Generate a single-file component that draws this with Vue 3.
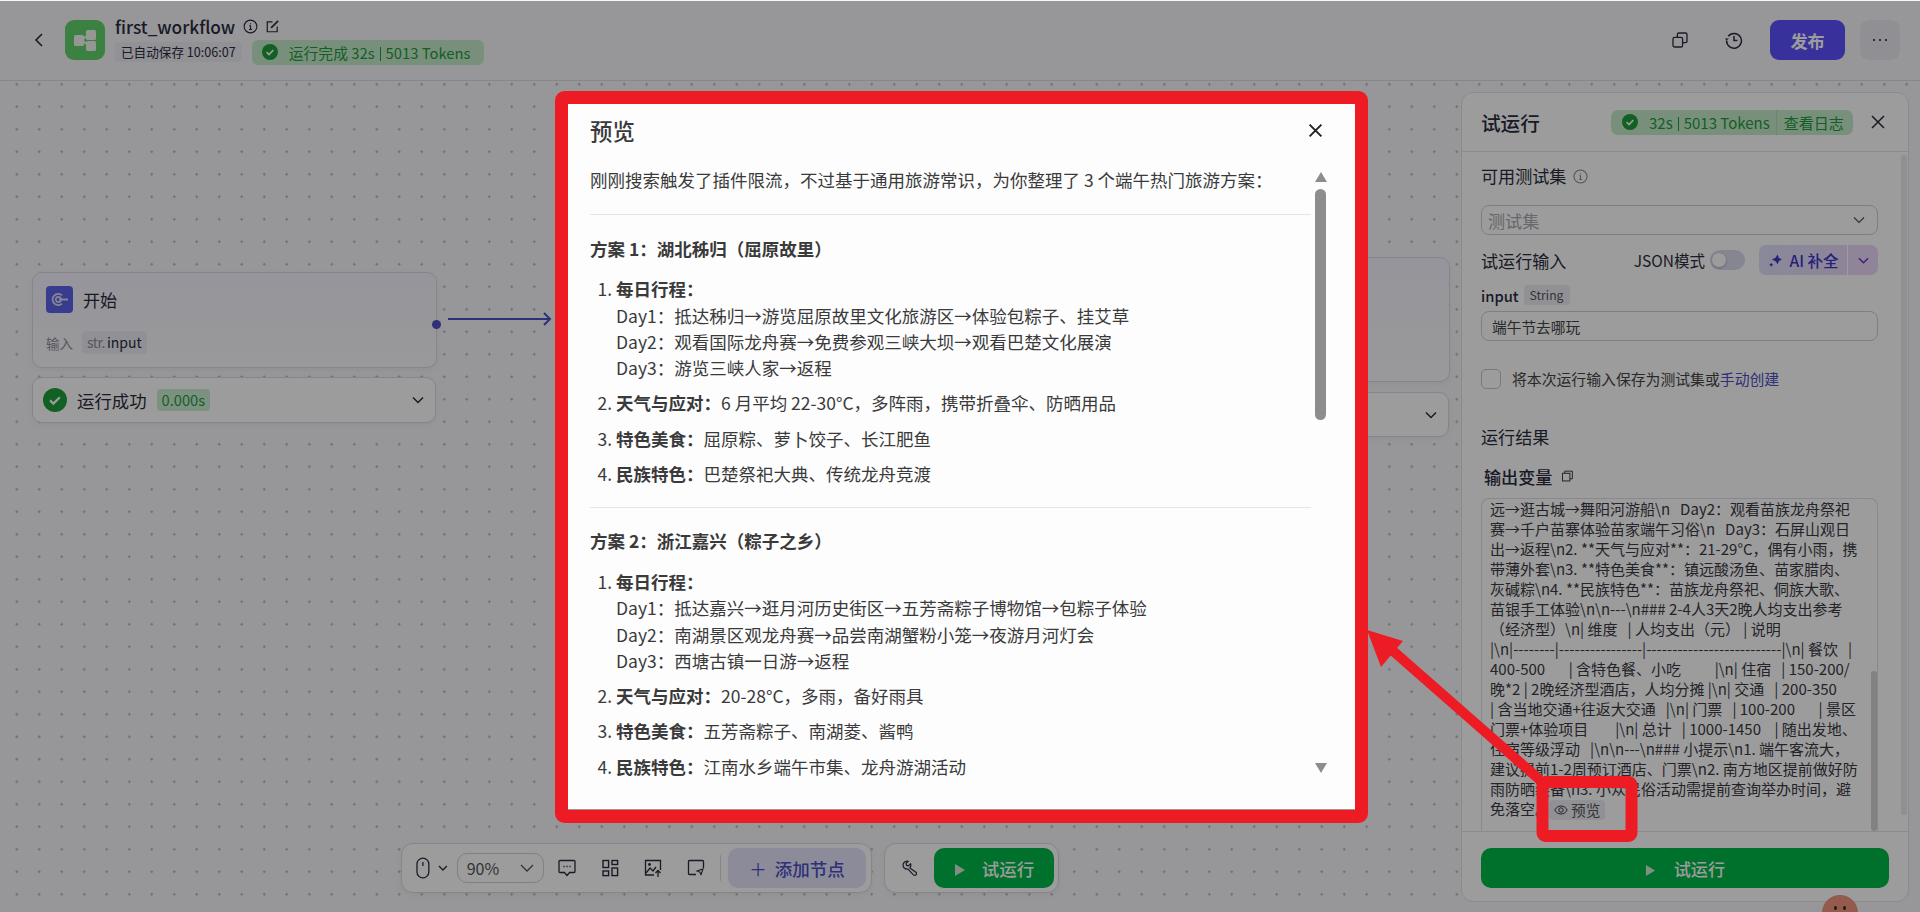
<template>
  <div class="page">
    <header class="header">
      <svg class="back" viewBox="0 0 14 20" width="14" height="20"><path d="M10 4 4 10l6 6" fill="none" stroke="#2a2c3d" stroke-width="1.6" /></svg>
      <div class="logo">
        <svg viewBox="0 0 40 40" width="40" height="40">
          <rect x="9" y="15" width="10" height="11" rx="1.5" fill="#f2f7f2" />
          <rect x="21" y="10" width="10" height="10" rx="1.5" fill="#f2f7f2" />
          <rect x="21" y="21" width="10" height="10" rx="1.5" fill="#f2f7f2" />
          <path d="M17 20 24 14M17 20l7 6" stroke="#f2f7f2" stroke-width="2" />
        </svg>
      </div>
      <div class="title-block">
        <div class="title-row">
          <span class="wf-name">first_workflow</span>
          <svg viewBox="0 0 16 16" width="15" height="15"><circle cx="8" cy="8" r="6.8" fill="none" stroke="#2a2c3d" stroke-width="1.2" /><path d="M6.6 7.2H8v4M6.4 11.2h3.2M8 4.4v1.2" fill="none" stroke="#2a2c3d" stroke-width="1.2" /></svg>
          <svg class="edit" viewBox="0 0 16 16" width="15" height="15"><path d="M13 8v5.6H2.4V3H8" fill="none" stroke="#2a2c3d" stroke-width="1.3" /><path d="M6.5 9.5 14 2" fill="none" stroke="#2a2c3d" stroke-width="1.8" /></svg>
        </div>
        <div class="meta-row">
          <span class="save-tag">已自动保存 10:06:07</span>
          <span class="status-pill">
            <svg viewBox="0 0 16 16" width="16" height="16"><circle cx="8" cy="8" r="8" fill="#1f9d3c" /><path d="m4.6 8.2 2.4 2.3 4.3-4.4" fill="none" stroke="#fff" stroke-width="1.6" /></svg>
            <span>运行完成 32s<i class="sep"></i>5013 Tokens</span>
          </span>
        </div>
      </div>
      <div class="header-right">
        <svg viewBox="0 0 16 16" width="16" height="16"><rect x="1" y="5.4" width="9.6" height="9.6" rx="1.6" fill="none" stroke="#2a2c3d" stroke-width="1.3" /><path d="M5.4 5V2.4A1.4 1.4 0 0 1 6.8 1h6.8A1.4 1.4 0 0 1 15 2.4v6.8a1.4 1.4 0 0 1-1.4 1.4H11" fill="none" stroke="#2a2c3d" stroke-width="1.3" /></svg>
        <svg class="history" viewBox="0 0 18 18" width="18" height="18"><path d="M3.2 5.2A7.4 7.4 0 1 1 1.6 9.6" fill="none" stroke="#2a2c3d" stroke-width="1.5" /><path d="M0 7.4 1.4 9.6 4 7.6" fill="#2a2c3d" /><path d="M9 5v4.6h3.4" fill="none" stroke="#2a2c3d" stroke-width="1.5" /></svg>
        <button class="publish">发布</button>
        <button class="more"><svg viewBox="0 0 16 4" width="16" height="4"><circle cx="2" cy="2" r="1.1" fill="#2a2c3d" /><circle cx="8" cy="2" r="1.1" fill="#2a2c3d" /><circle cx="14" cy="2" r="1.1" fill="#2a2c3d" /></svg></button>
      </div>
    </header>

    <main class="canvas">
      <!-- start node -->
      <section class="node start-node">
        <div class="node-head">
          <div class="node-icon">
            <svg viewBox="0 0 27 27" width="27" height="27"><path d="M16 9.4a5.6 5.6 0 1 0 0 8.2" fill="none" stroke="#dcdcf0" stroke-width="1.8" /><circle cx="12.4" cy="13.5" r="2.6" fill="none" stroke="#dcdcf0" stroke-width="1.6" /><path d="M13 13.5h9" stroke="#dcdcf0" stroke-width="2" /></svg>
          </div>
          <span>开始</span>
        </div>
        <div class="node-row">
          <span class="node-label">输入</span>
          <span class="var-tag"><em>str.</em>input</span>
        </div>
        <i class="handle"></i>
      </section>
      <section class="node run-card start-run">
        <svg viewBox="0 0 24 24" width="24" height="24"><circle cx="12" cy="12" r="12" fill="#1f9d3c" /><path d="m7 12.4 3.4 3.2 6.4-6.4" fill="none" stroke="#fff" stroke-width="2.2" /></svg>
        <span class="run-text">运行成功</span>
        <span class="time-tag">0.000s</span>
        <svg class="run-chevron" viewBox="0 0 14 14" width="14" height="14"><path d="m2 4.5 5 5 5-5" fill="none" stroke="#2a2c3d" stroke-width="1.5" /></svg>
      </section>
      <svg class="edge" viewBox="0 0 110 20" width="110" height="20"><path d="M2 10h102M98 4l6 6-6 6" fill="none" stroke="#4d4fc4" stroke-width="2" /></svg>

      <!-- node behind the dialog -->
      <section class="node end-node"></section>
      <section class="node run-card end-run">
        <svg class="run-chevron" viewBox="0 0 14 14" width="14" height="14"><path d="m2 4.5 5 5 5-5" fill="none" stroke="#2a2c3d" stroke-width="1.5" /></svg>
      </section>

      <!-- bottom toolbar -->
      <div class="toolbar">
        <div class="tool-group">
          <svg class="mouse" viewBox="0 0 14 22" width="14" height="22"><rect x="1" y="1" width="12" height="20" rx="6" fill="none" stroke="#2a2c3d" stroke-width="1.3" /><path d="M7 5v4" stroke="#2a2c3d" stroke-width="1.3" /></svg>
          <svg class="mini-chev" viewBox="0 0 10 10" width="10" height="10"><path d="m1 3 4 4 4-4" fill="none" stroke="#2a2c3d" stroke-width="1.3" /></svg>
          <div class="zoom-select">
            <span>90%</span>
            <svg viewBox="0 0 14 14" width="14" height="14"><path d="m1 4 6 6 6-6" fill="none" stroke="#555" stroke-width="1.3" /></svg>
          </div>
          <svg class="tool-icon" viewBox="0 0 18 18" width="18" height="18"><path d="M2 1.5h14a1 1 0 0 1 1 1v10a1 1 0 0 1-1 1h-4.4L9 16.5l-2.6-3H2a1 1 0 0 1-1-1v-10a1 1 0 0 1 1-1Z" fill="none" stroke="#2a2c3d" stroke-width="1.3" /><path d="M5.4 7.5h1.2M8.4 7.5h1.2M11.4 7.5h1.2" stroke="#2a2c3d" stroke-width="1.6" /></svg>
          <svg class="tool-icon" viewBox="0 0 18 18" width="18" height="18"><rect x="2" y="1.5" width="5.6" height="7" fill="none" stroke="#2a2c3d" stroke-width="1.4" /><rect x="11" y="1.5" width="5.6" height="4" fill="none" stroke="#2a2c3d" stroke-width="1.4" /><rect x="2" y="12" width="5.6" height="4.6" fill="none" stroke="#2a2c3d" stroke-width="1.4" /><rect x="11" y="9" width="5.6" height="7.6" fill="none" stroke="#2a2c3d" stroke-width="1.4" /></svg>
          <svg class="tool-icon" viewBox="0 0 18 18" width="18" height="18"><path d="M10 16H1.5V1.5h15V11" fill="none" stroke="#2a2c3d" stroke-width="1.3" /><path d="m2 14 4-5 3 3 3-4" fill="none" stroke="#2a2c3d" stroke-width="1.3" /><circle cx="5.5" cy="5.5" r="1.4" fill="#2a2c3d" /><path d="M14 18v-6M11.5 14l2.5-2.5 2.5 2.5" fill="none" stroke="#2a2c3d" stroke-width="1.3" /></svg>
          <svg class="tool-icon" viewBox="0 0 18 18" width="18" height="18"><path d="M9 15.5H2.5a1 1 0 0 1-1-1V2.5a1 1 0 0 1 1-1h13a1 1 0 0 1 1 1V9" fill="none" stroke="#2a2c3d" stroke-width="1.3" /><path d="m10 12 6-2-2 5.5-1.2-2.4Z" fill="none" stroke="#2a2c3d" stroke-width="1.1" /></svg>
          <i class="tool-sep"></i>
          <button class="add-node"><span class="plus">＋</span>添加节点</button>
        </div>
        <div class="tool-group run-group">
          <svg class="wrench" viewBox="0 0 18 18" width="17" height="17"><path d="M7.6 1.3 5.4 3.6l.5 2 2 .6L10.2 4a4.4 4.4 0 0 1-.8 4.4l6.4 4.6a1.9 1.9 0 0 1-2.6 2.8L7.4 9.6A4.4 4.4 0 0 1 2.2 4.6a4.4 4.4 0 0 1 5.4-3.3Z" fill="none" stroke="#2a2c3d" stroke-width="1.3" stroke-linejoin="round" /></svg>
          <button class="run-btn">
            <svg viewBox="0 0 12 14" width="12" height="14"><path d="M1 1v12l10-6Z" fill="#d2e8d8" /></svg>
            试运行
          </button>
        </div>
      </div>

      <!-- test run panel -->
      <aside class="panel">
        <div class="panel-head">
          <span class="panel-title">试运行</span>
          <span class="panel-pill">
            <svg viewBox="0 0 16 16" width="16" height="16"><circle cx="8" cy="8" r="8" fill="#1f9d3c" /><path d="m4.6 8.2 2.4 2.3 4.3-4.4" fill="none" stroke="#fff" stroke-width="1.6" /></svg>
            <span class="pill-nums">32s<i class="sep"></i>5013 Tokens</span>
            <span class="pill-log">查看日志</span>
          </span>
          <svg class="panel-close" viewBox="0 0 16 16" width="16" height="16"><path d="m2 2 12 12M14 2 2 14" stroke="#2a2c3d" stroke-width="1.5" /></svg>
        </div>
        <div class="panel-body">
          <div class="label-row">
            可用测试集
            <svg viewBox="0 0 16 16" width="15" height="15"><circle cx="8" cy="8" r="7" fill="none" stroke="#8a8a90" stroke-width="1.1" /><path d="M6.8 7.2H8v4M6.6 11.2h2.8M8 4.4v1.2" fill="none" stroke="#8a8a90" stroke-width="1.1" /></svg>
          </div>
          <div class="field select-field">
            <span class="placeholder">测试集</span>
            <svg viewBox="0 0 12 12" width="12" height="12"><path d="m1 3.5 5 5 5-5" fill="none" stroke="#555" stroke-width="1.2" /></svg>
          </div>
          <div class="input-head">
            <span class="label-text">试运行输入</span>
            <span class="json-mode">JSON模式</span>
            <span class="switch"><i></i></span>
            <span class="ai-btn">
              <span class="ai-main">
                <svg viewBox="0 0 14 14" width="15" height="15"><path d="M9 1.5 10.2 4.6 13 6 10.2 7.4 9 10.5 7 7.6 3.6 6 7 4.4ZM3 9l.7 1.3L5 11l-1.3.7L3 13l-.7-1.3L1 11l1.3-.7Z" fill="#3f37c9" /></svg>
                AI 补全
              </span>
              <span class="ai-drop"><svg viewBox="0 0 12 12" width="11" height="11"><path d="m1 3.5 5 5 5-5" fill="none" stroke="#5a2fd0" stroke-width="1.4" /></svg></span>
            </span>
          </div>
          <div class="var-row"><b>input</b><span class="type-tag">String</span></div>
          <div class="field input-field">端午节去哪玩</div>
          <div class="check-row">
            <i class="checkbox"></i>
            <span>将本次运行输入保存为测试集或<a>手动创建</a></span>
          </div>
          <div class="label-row result-label">运行结果</div>
          <div class="output-label">
            输出变量
            <svg viewBox="0 0 12 12" width="11" height="12"><rect x=".6" y="3" width="8" height="8.4" fill="none" stroke="#2a2c3d" stroke-width="1" /><path d="M3 3V.7h8.3v8.4H8.6" fill="none" stroke="#2a2c3d" stroke-width="1" /></svg>
          </div>
          <div class="output-box">
            <div v-for="(line, i) in outputLines" :key="i" class="output-line">{{ line }}</div>
            <span class="preview-tag">
              <svg viewBox="0 0 14 14" width="14" height="14"><path d="M.8 7C2.2 4.4 4.4 3 7 3s4.8 1.4 6.2 4c-1.4 2.6-3.6 4-6.2 4S2.2 9.6.8 7Z" fill="none" stroke="#3a3a44" stroke-width="1" /><circle cx="7" cy="7" r="2.2" fill="none" stroke="#3a3a44" stroke-width="1" /></svg>
              预览
            </span>
            <i class="box-scroll"></i>
          </div>
          <i class="body-scroll"></i>
        </div>
        <div class="panel-foot">
          <button class="foot-run">
            <svg viewBox="0 0 12 14" width="11" height="13"><path d="M1 1v12l10-6Z" fill="#d2e8d8" /></svg>
            试运行
          </button>
        </div>
      </aside>
      <div class="mascot"><i></i><i></i></div>
    </main>

    <!-- preview dialog -->
    <div class="mask">
      <div class="modal">
        <div class="modal-head">
          <span class="modal-title">预览</span>
          <svg viewBox="0 0 14 14" width="15" height="15"><path d="m1.5 1.5 11 11M12.5 1.5l-11 11" stroke="#222" stroke-width="1.8" /></svg>
        </div>
        <div class="modal-body">
          <p class="intro">刚刚搜索触发了插件限流，不过基于通用旅游常识，为你整理了 3 个端午热门旅游方案：</p>
          <template v-for="plan in plans" :key="plan.title">
            <hr />
            <h4>{{ plan.title }}</h4>
            <ol>
              <li class="first-item">
                <b>每日行程：</b>
                <div v-for="day in plan.days" :key="day" class="day">{{ day }}</div>
              </li>
              <li v-for="item in plan.items" :key="item[0]"><b>{{ item[0] }}：</b>{{ item[1] }}</li>
            </ol>
          </template>
          <svg class="scroll-up" viewBox="0 0 12 10" width="12" height="10"><path d="M6 0 12 10H0Z" fill="#8d8d8d" /></svg>
          <i class="scroll-thumb"></i>
          <svg class="scroll-down" viewBox="0 0 12 10" width="12" height="10"><path d="M6 10 12 0H0Z" fill="#8d8d8d" /></svg>
        </div>
      </div>
    </div>

    <!-- red annotations on the screenshot -->
    <svg class="marks" viewBox="0 0 1920 912" width="1920" height="912">
      <rect x="561.5" y="97.5" width="800" height="719" rx="3" fill="none" stroke="#ed1c24" stroke-width="13" />
      <rect x="1542.5" y="782" width="89" height="54" rx="3" fill="none" stroke="#ed1c24" stroke-width="12" />
      <path d="M1540 780 1384 643" fill="none" stroke="#ed1c24" stroke-width="10" />
      <path d="M1367 630 1403 641 1381 667Z" fill="#ed1c24" />
    </svg>
  </div>
</template>

<script setup>
const outputLines = [
  '远→逛古城→舞阳河游船\\n   Day2：观看苗族龙舟祭祀',
  '赛→千户苗寨体验苗家端午习俗\\n   Day3：石屏山观日',
  '出→返程\\n2. **天气与应对**：21-29°C，偶有小雨，携',
  '带薄外套\\n3. **特色美食**：镇远酸汤鱼、苗家腊肉、',
  '灰碱粽\\n4. **民族特色**：苗族龙舟祭祀、侗族大歌、',
  '苗银手工体验\\n\\n---\\n### 2-4人3天2晚人均支出参考',
  '（经济型）\\n| 维度   | 人均支出（元） | 说明',
  '|\\n|--------|----------------|--------------------------|\\n| 餐饮   |',
  '400-500       | 含特色餐、小吃          |\\n| 住宿   | 150-200/',
  '晚*2 | 2晚经济型酒店，人均分摊 |\\n| 交通   | 200-350',
  '| 含当地交通+往返大交通   |\\n| 门票   | 100-200       | 景区',
  '门票+体验项目        |\\n| 总计   | 1000-1450    | 随出发地、',
  '住宿等级浮动   |\\n\\n---\\n### 小提示\\n1. 端午客流大，',
  '建议提前1-2周预订酒店、门票\\n2. 南方地区提前做好防',
  '雨防晒装备\\n3. 小众民俗活动需提前查询举办时间，避',
  '免落空。',
]

const plans = [
  {
    title: '方案 1：湖北秭归（屈原故里）',
    days: [
      'Day1：抵达秭归→游览屈原故里文化旅游区→体验包粽子、挂艾草',
      'Day2：观看国际龙舟赛→免费参观三峡大坝→观看巴楚文化展演',
      'Day3：游览三峡人家→返程',
    ],
    items: [
      ['天气与应对', '6 月平均 22-30°C，多阵雨，携带折叠伞、防晒用品'],
      ['特色美食', '屈原粽、萝卜饺子、长江肥鱼'],
      ['民族特色', '巴楚祭祀大典、传统龙舟竞渡'],
    ],
  },
  {
    title: '方案 2：浙江嘉兴（粽子之乡）',
    days: [
      'Day1：抵达嘉兴→逛月河历史街区→五芳斋粽子博物馆→包粽子体验',
      'Day2：南湖景区观龙舟赛→品尝南湖蟹粉小笼→夜游月河灯会',
      'Day3：西塘古镇一日游→返程',
    ],
    items: [
      ['天气与应对', '20-28°C，多雨，备好雨具'],
      ['特色美食', '五芳斋粽子、南湖菱、酱鸭'],
      ['民族特色', '江南水乡端午市集、龙舟游湖活动'],
    ],
  },
]
</script>

<style>
html, body { margin: 0; background: #f4f4f4; }
</style>

<style scoped>
.page {
  position: relative;
  width: 1920px;
  height: 912px;
  overflow: hidden;
  display: flex;
  flex-direction: column;
  font-family: "Noto Sans CJK SC", "Noto Sans", sans-serif;
  color: #2a2c3d;
  background: #f7f7fa;
}
button { font-family: inherit; border: 0; padding: 0; }
i { display: block; font-style: normal; }

/* header */
.header {
  height: 80px;
  flex: none;
  display: flex;
  align-items: center;
  padding: 0 20px 0 32px;
  border-bottom: 1px solid #dcdce4;
  box-sizing: content-box;
}
.logo {
  width: 40px;
  height: 40px;
  margin-left: 19px;
  border-radius: 9px;
  background: #62d36a;
}
.title-block { margin-left: 10px; display: flex; flex-direction: column; gap: 2px; }
.title-row { display: flex; align-items: center; gap: 8px; height: 22px; }
.wf-name { font-size: 17.3px; line-height: 22px; font-weight: 500; }
.edit { margin-left: -1px; }
.meta-row { display: flex; align-items: center; gap: 10px; }
.save-tag {
  font-size: 12.6px;
  line-height: 20px;
  padding: 0 6px;
  border-radius: 4px;
  background: #eeeef5;
}
.status-pill {
  display: flex;
  align-items: center;
  gap: 11px;
  height: 25px;
  padding: 0 13px 0 10px;
  border-radius: 6px;
  background: #c5ecc9;
  color: #1d9a3e;
  font-size: 14.8px;
}
.sep {
  display: inline-block;
  width: 1px;
  height: 14px;
  margin: 0 5px;
  vertical-align: -2px;
  background: currentColor;
}
.header-right { margin-left: auto; display: flex; align-items: center; }
.history { margin-left: 37px; }
.publish {
  width: 75px;
  height: 40px;
  margin-left: 27px;
  border-radius: 9px;
  background: #5c50ff;
  color: #fff;
  font-size: 17.1px;
  font-weight: 700;
}
.more {
  width: 40px;
  height: 40px;
  margin-left: 15px;
  display: flex;
  align-items: center;
  justify-content: center;
  border-radius: 9px;
  background: #ebebf2;
}

/* canvas */
.canvas {
  position: relative;
  flex: 1;
  background-color: #f7f7fa;
  background-image: radial-gradient(circle, #b5b5be 1px, transparent 1.2px);
  background-size: 22.5px 22.5px;
  background-position: 5.5px -8px;
}
.node {
  position: absolute;
  box-sizing: border-box;
  border: 1px solid #d9d9e2;
  border-radius: 10px;
  background: #fff;
  box-shadow: 0 2px 6px rgba(0, 0, 0, .05);
}
.start-node {
  left: 32px;
  top: 191px;
  width: 405px;
  height: 96px;
  padding: 13px 13px;
  background: linear-gradient(#f3f3fd, #fbfbfe);
}
.node-head { display: flex; align-items: center; gap: 10px; font-size: 17.1px; }
.node-icon { width: 27px; height: 27px; border-radius: 4px; background: #5c62e8; }
.node-row { display: flex; align-items: center; gap: 9px; margin-top: 18px; }
.node-label { font-size: 13.5px; color: #8f8f98; }
.var-tag {
  height: 23px;
  padding: 0 5px;
  border-radius: 4px;
  background: #ececf5;
  font-size: 14px;
  line-height: 23px;
}
.var-tag em { font-style: normal; color: #8f8f98; margin-right: 2px; letter-spacing: -.5px; }
.handle {
  position: absolute;
  right: -5px;
  top: 47px;
  width: 9px;
  height: 9px;
  border-radius: 50%;
  background: #4d4fc4;
}
.edge { position: absolute; left: 446px; top: 228px; }
.run-card {
  display: flex;
  align-items: center;
  padding: 0 10px;
  height: 46px;
}
.start-run { left: 32px; top: 296px; width: 404px; }
.run-text { margin-left: 10px; font-size: 17.4px; }
.time-tag {
  margin-left: 10px;
  padding: 0 5px;
  height: 22px;
  border-radius: 4px;
  background: #cdeed3;
  color: #1d9a3e;
  font-size: 14.7px;
  line-height: 22px;
}
.run-chevron { margin-left: auto; }
.end-node { left: 1300px; top: 176px; width: 150px; height: 125px; background: linear-gradient(#f3f3fd, #fbfbfe); }
.end-run { left: 1300px; top: 311px; width: 149px; height: 45px; justify-content: flex-end; }

/* toolbar */
.toolbar {
  position: absolute;
  left: 401px;
  top: 762px;
  display: flex;
  gap: 12px;
}
.tool-group {
  box-sizing: border-box;
  height: 50px;
  width: 471px;
  display: flex;
  align-items: center;
  padding: 0 5px 0 14px;
  border: 1px solid #d9d9e2;
  border-radius: 12px;
  background: #fff;
  box-shadow: 0 2px 6px rgba(0, 0, 0, .05);
}
.mini-chev { margin-left: 8px; }
.zoom-select {
  box-sizing: border-box;
  width: 88px;
  height: 30px;
  margin-left: 9px;
  padding: 0 9px;
  display: flex;
  align-items: center;
  justify-content: space-between;
  border: 1px solid #d0d0da;
  border-radius: 10px;
  font-size: 16px;
  color: #555;
}
.tool-icon { margin-left: 25px; flex: none; }
.zoom-select + .tool-icon { margin-left: 14px; }
.tool-sep { width: 1px; height: 26px; margin-left: 15px; background: #dcdce4; }
.add-node {
  width: 140px;
  height: 40px;
  margin-left: 7px;
  border-radius: 10px;
  background: #e4e4fb;
  color: #4d4fc4;
  font-size: 17.5px;
  font-weight: 500;
}
.plus { margin-right: 8px; font-weight: 400; }
.run-group { width: 175px; padding: 0 4px 0 16px; gap: 16px; }
.wrench { flex: none; }
.run-btn {
  width: 120px;
  height: 40px;
  margin-left: auto;
  border-radius: 10px;
  background: #00b948;
  color: #fff;
  font-size: 17.5px;
  font-weight: 500;
}
.run-btn svg { margin-right: 12px; vertical-align: -1px; }

/* test run panel */
.panel {
  position: absolute;
  left: 1461px;
  top: 11px;
  width: 448px;
  height: 810px;
  box-sizing: border-box;
  display: flex;
  flex-direction: column;
  border: 1px solid #e3e3ea;
  border-radius: 12px;
  background: #fff;
}
.panel-head {
  flex: none;
  height: 59px;
  box-sizing: border-box;
  display: flex;
  align-items: center;
  padding: 0 21px 0 19px;
  border-bottom: 1px solid #e3e3ea;
}
.panel-title { font-size: 19.6px; font-weight: 500; }
.panel-pill {
  margin-left: auto;
  display: flex;
  align-items: center;
  height: 25px;
  width: 242px;
  box-sizing: border-box;
  padding-left: 11px;
  border-radius: 7px;
  background: #c5ecc9;
  color: #1d9a3e;
  font-size: 15px;
}
.pill-nums { margin-left: 11px; }
.pill-log {
  margin-left: 6px;
  padding-left: 7px;
  line-height: 25px;
  border-left: 1px solid #aedbb5;
}
.panel-close { margin-left: 17px; margin-right: 1px; }
.panel-body {
  position: relative;
  flex: 1;
  min-height: 0;
  display: flex;
  flex-direction: column;
  overflow: hidden;
  padding: 0 30px 0 19px;
}
.label-row {
  margin-top: 12px;
  height: 24px;
  display: flex;
  align-items: center;
  gap: 7px;
  font-size: 17.1px;
  line-height: 24px;
}
.field {
  box-sizing: border-box;
  height: 30px;
  display: flex;
  align-items: center;
  flex: none;
  border: 1px solid #cfcfd9;
  border-radius: 8px;
  padding: 0 6px;
}
.select-field { margin-top: 17px; justify-content: space-between; padding-right: 12px; }
.placeholder { font-size: 17.1px; color: #a9a9b2; }
.input-head { margin-top: 10px; height: 30px; flex: none; display: flex; align-items: center; }
.label-text { font-size: 17.1px; }
.json-mode { margin-left: auto; font-size: 15.5px; }
.switch {
  position: relative;
  width: 35px;
  height: 20px;
  margin-left: 5px;
  margin-right: 14px;
  border-radius: 10px;
  background: #dcdcf0;
}
.switch i {
  position: absolute;
  left: 2px;
  top: 3px;
  width: 14px;
  height: 14px;
  border-radius: 50%;
  background: #fff;
  box-shadow: 0 1px 3px rgba(0, 0, 0, .25);
}
.ai-btn {
  display: flex;
  height: 30px;
  width: 119px;
  border-radius: 7px;
  overflow: hidden;
  color: #3f37c9;
  font-size: 15.5px;
  font-weight: 500;
}
.ai-main {
  flex: 1;
  display: flex;
  align-items: center;
  justify-content: center;
  gap: 7px;
  background: linear-gradient(90deg, #dfe0fb, #ead9fa);
}
.ai-drop {
  width: 30px;
  margin-left: 1px;
  display: flex;
  align-items: center;
  justify-content: center;
  background: #ecd8fb;
}
.var-row { margin-top: 10px; height: 20px; flex: none; display: flex; align-items: center; gap: 5px; }
.var-row b { font-size: 14.7px; font-weight: 500; }
.type-tag {
  height: 20px;
  padding: 0 6px;
  border-radius: 4px;
  background: #ececf3;
  color: #555;
  font-size: 12.2px;
  line-height: 20px;
}
.input-field { margin-top: 6px; padding-left: 10px; font-size: 14.7px; color: #444; }
.check-row { margin-top: 27px; flex: none; display: flex; align-items: center; gap: 11px; font-size: 14.85px; color: #444; }
.checkbox {
  box-sizing: border-box;
  width: 20px;
  height: 20px;
  border: 1px solid #c4c4ce;
  border-radius: 5px;
}
.check-row a { color: #4d4fc4; }
.result-label { margin-top: 36px; flex: none; }
.output-label {
  margin-top: 15px;
  padding-left: 3px;
  flex: none;
  display: flex;
  align-items: center;
  gap: 10px;
  height: 24px;
  font-size: 17.1px;
  font-weight: 500;
}
.output-box {
  position: relative;
  margin-top: 10px;
  flex: 1;
  overflow: hidden;
  border: 1px solid #dedee6;
  border-bottom: 0;
  border-radius: 8px 8px 0 0;
  padding: 0 8px;
  font-size: 15px;
  line-height: 20px;
  color: #3a3a44;
}
.output-line { white-space: pre; }
.preview-tag {
  position: absolute;
  left: 67px;
  top: 301px;
  display: flex;
  align-items: center;
  gap: 3px;
  height: 20px;
  padding: 0 5px;
  border-radius: 4px;
  background: #ececf3;
  font-size: 14.7px;
  color: #555;
}
.box-scroll {
  position: absolute;
  right: 0;
  bottom: 0;
  width: 6px;
  height: 160px;
  border-radius: 3px;
  background: #d5d5d5;
}
.body-scroll {
  position: absolute;
  right: 1px;
  top: 3px;
  width: 6px;
  height: 660px;
  border-radius: 3px;
  background: #ebebeb;
}
.panel-foot { flex: none; height: 70px; box-sizing: border-box; padding: 16px 19px; border-top: 1px solid #e3e3ea; }
.foot-run {
  width: 100%;
  height: 40px;
  border-radius: 10px;
  background: #00b948;
  color: #fff;
  font-size: 17.1px;
  font-weight: 500;
}
.foot-run svg { margin-right: 14px; vertical-align: -1px; }
.mascot {
  position: absolute;
  left: 1822px;
  top: 814px;
  width: 36px;
  height: 36px;
  border-radius: 50%;
  background: #f0937e;
}
.mascot i {
  position: absolute;
  top: 11px;
  width: 3px;
  height: 4px;
  border-radius: 50%;
  background: #3a2a2a;
}
.mascot i:first-child { left: 12px; }
.mascot i:last-child { right: 12px; }

/* dialog */
.mask {
  position: absolute;
  inset: 1px 0 0;
  display: flex;
  align-items: center;
  justify-content: center;
  background: rgba(0, 0, 0, .39);
}
.modal {
  width: 787px;
  height: 705px;
  margin-left: 3px;
  display: flex;
  flex-direction: column;
  background: #fdfdfe;
  color: #3a3a3a;
  overflow: hidden;
}
.modal-head {
  flex: none;
  height: 50px;
  box-sizing: border-box;
  display: flex;
  align-items: center;
  justify-content: space-between;
  padding: 2px 32px 0 22px;
}
.modal-title { font-size: 22.4px; font-weight: 500; }
.modal-body {
  position: relative;
  flex: 1;
  min-height: 0;
  overflow: hidden;
  padding: 0 44px 0 22px;
  font-size: 17.5px;
  line-height: 26.2px;
}
.intro { margin: 13px 0 21px; }
hr { border: 0; border-top: 1px solid #e6e6ea; margin: 0; }
h4 { margin: 20.5px 0 0; font-size: 17.5px; font-weight: 700; line-height: 26.2px; }
ol { margin: 14.5px 0 19.5px; padding: 0 0 0 26px; }
li { margin-top: 9.2px; }
li.first-item { margin-top: 0; }
li b { font-weight: 700; }
.scroll-up { position: absolute; right: 28px; top: 18px; }
.scroll-thumb {
  position: absolute;
  right: 29px;
  top: 35px;
  width: 11px;
  height: 231px;
  border-radius: 6px;
  background: #8d8d8d;
}
.scroll-down { position: absolute; right: 28px; top: 609px; }
.marks { position: absolute; left: 0; top: 0; pointer-events: none; }
</style>
